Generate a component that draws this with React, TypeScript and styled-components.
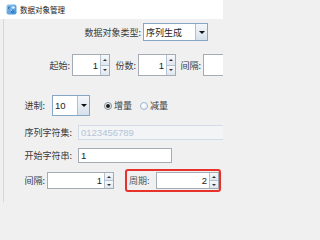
import React from "react";
import styled, { createGlobalStyle } from "styled-components";

const Global = createGlobalStyle`
  *, *::before, *::after { box-sizing: border-box; }
  html, body { margin: 0; padding: 0; background: #f0f0f0; }
  body {
    width: 223px; height: 202px; overflow: hidden;
    font-family: "Noto Sans CJK SC", "Liberation Sans", sans-serif;
  }
  #root { width: 223px; height: 202px; overflow: hidden; }
`;

const Window = styled.div`
  width: 223px;
  height: 202px;
  display: flex;
  flex-direction: column;
  background: #f0f0f0;
  overflow: hidden;
`;

const TitleBar = styled.div`
  height: 19px;
  flex: none;
  background: #ffffff;
  display: flex;
  align-items: center;
  padding-left: 6px;
  gap: 3px;
`;

const TitleText = styled.span`
  font-size: 7.5px;
  line-height: 1;
  color: #222;
  white-space: nowrap;
`;

const Body = styled.div`
  flex: 1;
  margin-left: 3px;
  border-left: 1px solid #d8d8d8;
  display: flex;
  flex-direction: column;
  padding-top: 4px;
`;

const Row = styled.div<{ $top: number; $h: number; $left?: number; $end?: boolean }>`
  flex: none;
  display: flex;
  align-items: center;
  height: ${(p) => p.$h}px;
  margin-top: ${(p) => p.$top}px;
  padding-left: ${(p) => p.$left ?? 0}px;
  ${(p) => (p.$end ? "justify-content: flex-end; padding-right: 15px;" : "")}
`;

const Label = styled.span<{ $w?: number; $gap: number; $color?: string }>`
  flex: none;
  font-size: 9px;
  line-height: 1;
  color: ${(p) => p.$color ?? "#3a3a3a"};
  white-space: nowrap;
  text-align: right;
  ${(p) => (p.$w ? `width: ${p.$w}px;` : "")}
  margin-right: ${(p) => p.$gap}px;
`;

/* ---------- Spinner ---------- */
const SpinBox = styled.div<{ $w?: number; $h: number }>`
  flex: ${(p) => (p.$w ? "none" : "1")};
  ${(p) => (p.$w ? `width: ${p.$w}px;` : "")}
  height: ${(p) => p.$h}px;
  display: flex;
  background: #fff;
  border: 1px solid #a4abb4;
`;

const SpinValue = styled.div`
  flex: 1;
  display: flex;
  align-items: center;
  justify-content: flex-end;
  padding-right: 2px;
  font-family: "Liberation Sans", "Noto Sans CJK SC", sans-serif;
  font-size: 9.5px;
  color: #222;
`;

const SpinCol = styled.div`
  width: 9px;
  flex: none;
  display: flex;
  flex-direction: column;
  border-left: 1px solid #b4c2d1;
`;

const SpinBtn = styled.div<{ $down?: boolean }>`
  flex: 1;
  display: flex;
  align-items: center;
  justify-content: center;
  background: linear-gradient(#f7f9fb, #dfe6ee);
  ${(p) => (p.$down ? "border-top: 1px solid #b4c2d1;" : "")}
  &::after {
    content: "";
    width: 0;
    height: 0;
    border-left: 2px solid transparent;
    border-right: 2px solid transparent;
    ${(p) =>
      p.$down ? "border-top: 2px solid #333;" : "border-bottom: 2px solid #333;"}
  }
`;

const Spinner = ({ w, h, value }: { w?: number; h: number; value: string }) => (
  <SpinBox $w={w} $h={h}>
    <SpinValue>{value}</SpinValue>
    <SpinCol>
      <SpinBtn />
      <SpinBtn $down />
    </SpinCol>
  </SpinBox>
);

/* ---------- Combo ---------- */
const ComboBox = styled.div<{ $w: number; $h: number }>`
  flex: none;
  width: ${(p) => p.$w}px;
  height: ${(p) => p.$h}px;
  display: flex;
  background: #fff;
  border: 1px solid #86a6c6;
`;

const ComboValue = styled.div<{ $latin?: boolean }>`
  flex: 1;
  display: flex;
  align-items: center;
  padding-left: 2px;
  font-size: 9px;
  color: #222;
  ${(p) => (p.$latin ? 'font-family: "Liberation Sans", sans-serif; font-size: 9.5px;' : "")}
`;

const ComboArrow = styled.div`
  width: 12px;
  flex: none;
  display: flex;
  align-items: center;
  justify-content: center;
  border-left: 1px solid #a9c0d8;
  background: linear-gradient(#f4f7fa, #d6e1ec);
  &::after {
    content: "";
    width: 0;
    height: 0;
    border-left: 3px solid transparent;
    border-right: 3px solid transparent;
    border-top: 3px solid #111;
  }
`;

/* ---------- Fields ---------- */
const Field = styled.div<{ $w: number; $disabled?: boolean }>`
  flex: none;
  width: ${(p) => p.$w}px;
  height: 100%;
  display: flex;
  align-items: center;
  padding-left: 2px;
  font-family: "Liberation Sans", "Noto Sans CJK SC", sans-serif;
  font-size: 9.5px;
  background: ${(p) => (p.$disabled ? "#f3f4f6" : "#fff")};
  border: 1px solid ${(p) => (p.$disabled ? "#d3dde8" : "#a4abb4")};
  color: ${(p) => (p.$disabled ? "#b2c5d9" : "#222")};
`;

/* ---------- Radio ---------- */
const RadioGroup = styled.div`
  display: flex;
  align-items: center;
  margin-left: 14px;
`;

const RadioDot = styled.span<{ $checked?: boolean }>`
  flex: none;
  width: 8px;
  height: 8px;
  border-radius: 50%;
  border: 1px solid ${(p) => (p.$checked ? "#7f8b97" : "#9fb6cf")};
  background: radial-gradient(circle at 40% 35%, #ffffff, #e3e9ef);
  display: flex;
  align-items: center;
  justify-content: center;
  margin-right: 2px;
  &::after {
    content: "";
    width: 4px;
    height: 4px;
    border-radius: 50%;
    background: ${(p) => (p.$checked ? "#1d1d1d" : "transparent")};
  }
`;

const RadioText = styled.span<{ $gap?: number }>`
  font-size: 9px;
  line-height: 1;
  color: #3a3a3a;
  white-space: nowrap;
  margin-right: ${(p) => p.$gap ?? 0}px;
`;

/* ---------- Highlight ---------- */
const Highlight = styled.div`
  flex: none;
  width: 96px;
  height: 23px;
  margin-left: 11px;
  border: 2px solid #e6322b;
  border-radius: 3px;
  display: flex;
  align-items: center;
  padding-left: 2px;
`;

const AppIcon = () => (
  <svg width="11" height="11" viewBox="0 0 11 11">
    <defs>
      <linearGradient id="ig" x1="0" y1="0" x2="1" y2="1">
        <stop offset="0" stopColor="#8cc4f0" />
        <stop offset="1" stopColor="#3f8fd6" />
      </linearGradient>
    </defs>
    <rect x="0.5" y="0.5" width="10" height="10" rx="2" fill="url(#ig)" />
    <circle cx="3.5" cy="4" r="1.6" fill="#2a6fb8" />
    <circle cx="7.5" cy="3.5" r="1.2" fill="#e8f4ff" />
    <circle cx="6.5" cy="7.5" r="1.5" fill="#2a6fb8" />
    <path d="M3.5 4 L7.5 3.5 M3.5 4 L6.5 7.5" stroke="#e8f4ff" strokeWidth="0.6" />
  </svg>
);

export default function App() {
  return (
    <Window>
      <Global />
      <TitleBar>
        <AppIcon />
        <TitleText>数据对象管理</TitleText>
      </TitleBar>
      <Body>
        <Row $top={0} $h={18} $end>
          <Label $gap={2}>数据对象类型:</Label>
          <ComboBox $w={65} $h={18}>
            <ComboValue>序列生成</ComboValue>
            <ComboArrow />
          </ComboBox>
        </Row>

        <Row $top={13} $h={22} $left={44}>
          <Label $w={22} $gap={2}>起始:</Label>
          <Spinner w={38} h={22} value="1" />
          <Label $w={26} $gap={2}>份数:</Label>
          <Spinner w={38} h={22} value="1" />
          <Label $w={25} $gap={2}>间隔:</Label>
          <SpinBox $w={40} $h={22} />
        </Row>

        <Row $top={19} $h={21} $left={20}>
          <Label $w={21} $gap={7}>进制:</Label>
          <ComboBox $w={38} $h={21}>
            <ComboValue $latin>10</ComboValue>
            <ComboArrow />
          </ComboBox>
          <RadioGroup>
            <RadioDot $checked />
            <RadioText $gap={8}>增量</RadioText>
            <RadioDot />
            <RadioText>减量</RadioText>
          </RadioGroup>
        </Row>

        <Row $top={9} $h={15} $left={20}>
          <Label $w={48} $gap={6}>序列字符集:</Label>
          <Field $w={150} $disabled>0123456789</Field>
        </Row>

        <Row $top={8} $h={15} $left={20}>
          <Label $w={48} $gap={6}>开始字符串:</Label>
          <Field $w={94}>1</Field>
        </Row>

        <Row $top={6} $h={23} $left={20}>
          <Label $w={21} $gap={2}>间隔:</Label>
          <Spinner w={67} h={17} value="1" />
          <Highlight>
            <Label $gap={6} $color="#555">周期:</Label>
            <Spinner h={17} value="2" />
          </Highlight>
        </Row>
      </Body>
    </Window>
  );
}
